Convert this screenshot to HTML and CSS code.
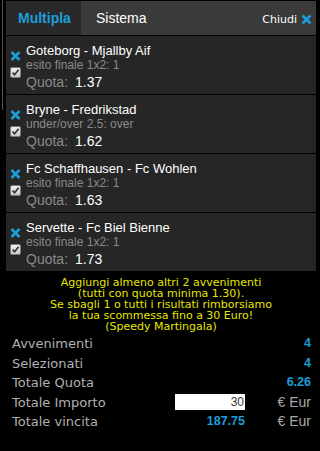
FILE: index.html
```html
<!DOCTYPE html>
<html>
<head>
<meta charset="utf-8">
<link rel="stylesheet" href="styles.css">
</head>
<body>
<div class="page">
  <div class="edge"></div>
  <div class="main">
    <div class="panel">
      <div class="tabs">
        <div class="tab active">Multipla</div>
        <div class="tab">Sistema</div>
        <div class="close">Chiudi
          <svg class="x-close" width="11" height="11" viewBox="0 0 11 11"><path d="M1.5 1.5 L9.5 9.5 M9.5 1.5 L1.5 9.5" stroke="#1a9fd9" stroke-width="2.6" fill="none"/></svg>
        </div>
      </div>

      <div class="item">
        <div class="icons">
          <svg width="11" height="10" viewBox="0 0 11 10"><path d="M1.5 1 L9.5 9 M9.5 1 L1.5 9" stroke="#1a9fd9" stroke-width="2.6" fill="none"/></svg>
          <svg width="11" height="11" viewBox="0 0 11 11"><defs><linearGradient id="g1" x1="0" y1="0" x2="0" y2="1"><stop offset="0" stop-color="#f2f2f2"/><stop offset="1" stop-color="#c8c8c8"/></linearGradient></defs><rect x="0.5" y="0.5" width="10" height="10" rx="1.5" fill="url(#g1)" stroke="#7a7a7a"/><path d="M2.6 5.6 L4.6 7.8 L8.6 2.8" stroke="#333" stroke-width="1.7" fill="none"/></svg>
        </div>
        <div class="body">
          <div class="title">Goteborg - Mjallby Aif</div>
          <div class="sub">esito finale 1x2: 1</div>
          <div class="quota">Quota:<span class="qv">1.37</span></div>
        </div>
      </div>

      <div class="item">
        <div class="icons">
          <svg width="11" height="10" viewBox="0 0 11 10"><path d="M1.5 1 L9.5 9 M9.5 1 L1.5 9" stroke="#1a9fd9" stroke-width="2.6" fill="none"/></svg>
          <svg width="11" height="11" viewBox="0 0 11 11"><rect x="0.5" y="0.5" width="10" height="10" rx="1.5" fill="url(#g1)" stroke="#7a7a7a"/><path d="M2.6 5.6 L4.6 7.8 L8.6 2.8" stroke="#333" stroke-width="1.7" fill="none"/></svg>
        </div>
        <div class="body">
          <div class="title">Bryne - Fredrikstad</div>
          <div class="sub">under/over 2.5: over</div>
          <div class="quota">Quota:<span class="qv">1.62</span></div>
        </div>
      </div>

      <div class="item">
        <div class="icons">
          <svg width="11" height="10" viewBox="0 0 11 10"><path d="M1.5 1 L9.5 9 M9.5 1 L1.5 9" stroke="#1a9fd9" stroke-width="2.6" fill="none"/></svg>
          <svg width="11" height="11" viewBox="0 0 11 11"><rect x="0.5" y="0.5" width="10" height="10" rx="1.5" fill="url(#g1)" stroke="#7a7a7a"/><path d="M2.6 5.6 L4.6 7.8 L8.6 2.8" stroke="#333" stroke-width="1.7" fill="none"/></svg>
        </div>
        <div class="body">
          <div class="title">Fc Schaffhausen - Fc Wohlen</div>
          <div class="sub">esito finale 1x2: 1</div>
          <div class="quota">Quota:<span class="qv">1.63</span></div>
        </div>
      </div>

      <div class="item">
        <div class="icons">
          <svg width="11" height="10" viewBox="0 0 11 10"><path d="M1.5 1 L9.5 9 M9.5 1 L1.5 9" stroke="#1a9fd9" stroke-width="2.6" fill="none"/></svg>
          <svg width="11" height="11" viewBox="0 0 11 11"><rect x="0.5" y="0.5" width="10" height="10" rx="1.5" fill="url(#g1)" stroke="#7a7a7a"/><path d="M2.6 5.6 L4.6 7.8 L8.6 2.8" stroke="#333" stroke-width="1.7" fill="none"/></svg>
        </div>
        <div class="body">
          <div class="title">Servette - Fc Biel Bienne</div>
          <div class="sub">esito finale 1x2: 1</div>
          <div class="quota">Quota:<span class="qv">1.73</span></div>
        </div>
      </div>
    </div>

    <div class="notice">Aggiungi almeno altri 2 avvenimenti<br>(tutti con quota minima 1.30).<br>Se sbagli 1 o tutti i risultati rimborsiamo<br>la tua scommessa fino a 30 Euro!<br>(Speedy Martingala)</div>

    <div class="summary">
      <div class="label">Avvenimenti</div>
      <div class="val span">4</div>
      <div class="label">Selezionati</div>
      <div class="val span">4</div>
      <div class="label">Totale Quota</div>
      <div class="val span">6.26</div>
      <div class="label">Totale Importo</div>
      <div class="inputcell"><input class="amount" type="text" value="30"></div>
      <div class="unit">€ Eur</div>
      <div class="label">Totale vincita</div>
      <div class="val">187.75</div>
      <div class="unit">€ Eur</div>
    </div>
  </div>
</div>
</body>
</html>
```

FILE: styles.css
```css
html, body {
  margin: 0;
  padding: 0;
  background: #000;
}
.page {
  display: flex;
  align-items: flex-start;
  width: 320px;
  height: 451px;
  overflow: hidden;
}
.edge {
  flex-shrink: 0;
  width: 1px;
  height: 110px;
  margin-left: 2px;
  margin-right: 3px;
  background: #555;
}
.main {
  width: 310px;
  flex-shrink: 0;
}
.panel {
  margin-top: 1px;
}
.tabs {
  display: flex;
  height: 34px;
  background: #3a3a3a;
  border-bottom: 1px solid #000;
}
.tab {
  font-family: "Liberation Sans", Arial, sans-serif;
  font-size: 14px;
  line-height: 34px;
  color: #fff;
  padding-left: 15px;
}
.tab.active {
  box-sizing: border-box;
  width: 75px;
  padding-left: 12px;
  background: #292929;
  color: #1a9fd9;
  font-weight: bold;
}
.close {
  margin-left: auto;
  display: flex;
  align-items: center;
  gap: 4px;
  padding-right: 4px;
  padding-top: 2px;
  font-family: "DejaVu Sans", Verdana, sans-serif;
  font-size: 11px;
  color: #fff;
}
.x-close {
  display: block;
}
.item {
  display: flex;
  height: 58px;
  padding-left: 4px;
  background: #262626;
  border-bottom: 1px solid #000;
}
.icons {
  width: 11px;
  display: flex;
  flex-direction: column;
  gap: 6px;
  padding-top: 15px;
}
.icons svg {
  display: block;
}
.body {
  margin-left: 5px;
  padding-top: 7px;
  font-family: "Liberation Sans", Arial, sans-serif;
  white-space: nowrap;
}
.title {
  font-size: 13px;
  line-height: 16px;
  color: #fff;
}
.sub {
  font-size: 12px;
  line-height: 13px;
  color: #8a8a8a;
}
.quota {
  font-size: 14px;
  line-height: 20px;
  color: #8a8a8a;
}
.qv {
  color: #fff;
  margin-left: 7px;
}
.notice {
  margin-top: 5px;
  font-family: "DejaVu Sans", Verdana, sans-serif;
  font-size: 11px;
  line-height: 11px;
  color: #e6e600;
  text-align: center;
  white-space: nowrap;
}
.summary {
  margin-top: 2px;
  padding: 0 5px 0 6px;
  display: grid;
  grid-template-columns: 1fr 70px 66px;
  grid-auto-rows: 19.5px;
  align-items: center;
}
.label {
  font-family: "DejaVu Sans", Verdana, sans-serif;
  font-size: 13px;
  line-height: 19.5px;
  color: #b0b0b0;
}
.val {
  font-family: "Liberation Sans", Arial, sans-serif;
  font-size: 12.5px;
  font-weight: bold;
  line-height: 19.5px;
  color: #1a9fd9;
  text-align: right;
}
.val.span {
  grid-column: 2 / 4;
}
.inputcell {
  display: flex;
  align-items: center;
}
.amount {
  box-sizing: border-box;
  width: 70px;
  height: 16px;
  margin: 0;
  border: 0;
  padding: 0 1px 0 0;
  background: #fff;
  color: #333;
  font-family: "Liberation Sans", Arial, sans-serif;
  font-size: 12px;
  text-align: right;
  outline: none;
}
.unit {
  font-family: "Liberation Sans", Arial, sans-serif;
  font-size: 14px;
  line-height: 19.5px;
  color: #a8a8a8;
  text-align: right;
}
```
